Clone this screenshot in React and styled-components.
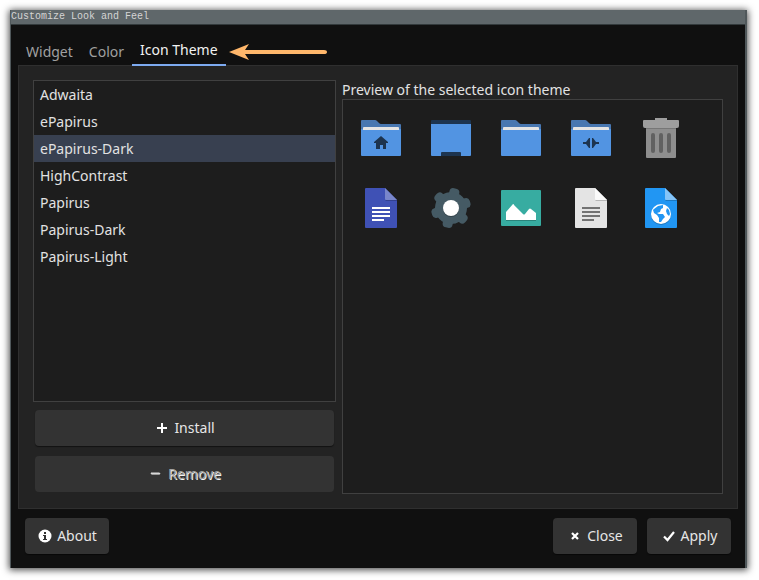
import React, { useState } from "react";
import styled, { createGlobalStyle } from "styled-components";

const GlobalStyle = createGlobalStyle`
  *, *::before, *::after { box-sizing: border-box; }
  body {
    margin: 0;
    background: #ffffff;
    color: #e2e2e2;
    font-family: "Noto Sans", "Open Sans", sans-serif;
    font-size: 14px;
    line-height: 20px;
  }
  button { font: inherit; color: inherit; }
  svg { display: block; flex: none; }
`;

const Desktop = styled.div`
  min-height: 100vh;
  padding: 10px 12px 12px 10px;
  display: flex;
`;

const Window = styled.main`
  flex: 1;
  min-width: 0;
  display: flex;
  flex-direction: column;
  background: #101010;
  border: solid #50585b;
  border-width: 0 2px 0 1px;
  box-shadow: 0 1px 7px 1px rgba(0, 0, 0, 0.7);
`;

const TitleBar = styled.header`
  height: 15px;
  background: #5f676a;
  border-bottom: 1px solid #333a3c;
  color: #d4d4d4;
  font-family: "Liberation Mono", monospace;
  font-size: 10px;
  line-height: 14px;
`;

const Body = styled.div`
  flex: 1;
  display: flex;
  flex-direction: column;
  padding: 8px 7px 14px;
`;

const TabRow = styled.div`
  display: flex;
  align-items: flex-end;
`;

const TabList = styled.div`
  position: relative;
  z-index: 1;
  display: flex;
  margin-bottom: -1px;
`;

const Tab = styled.button`
  height: 33px;
  padding: ${({ $active }) => ($active ? "3px 8px 0" : "6px 8px 0")};
  border: 0;
  border-bottom: 2px solid ${({ $active }) => ($active ? "#7daaf0" : "transparent")};
  background: none;
  color: ${({ $active }) => ($active ? "#f2f2f2" : "#a0a0a0")};
  white-space: nowrap;
`;

const ArrowSlot = styled.div`
  padding: 0 3px 4px;
`;

const Panel = styled.section`
  flex: 1;
  display: grid;
  grid-template-columns: minmax(0, 303fr) minmax(0, 381fr);
  gap: 6px;
  padding: 14px;
  background: #232323;
  border: 1px solid #2f2f2f;
`;

const Column = styled.div`
  display: flex;
  flex-direction: column;
  min-width: 0;
`;

const ThemeList = styled.ul`
  flex: 1;
  margin: 0 0 8px;
  padding: 0;
  list-style: none;
  background: #1d1d1d;
  border: 1px solid #404040;
`;

const ThemeRow = styled.button`
  display: block;
  width: 100%;
  height: 27px;
  padding: 0 6px;
  border: 0;
  background: ${({ $selected }) => ($selected ? "#384050" : "transparent")};
  text-align: left;
`;

const ButtonStack = styled.div`
  display: flex;
  flex-direction: column;
  gap: 10px;
  padding: 0 2px 2px;
`;

const Button = styled.button`
  height: 36px;
  min-width: 84px;
  padding: 0 12px;
  display: flex;
  align-items: center;
  justify-content: center;
  gap: 4px;
  border: 0;
  border-radius: 4px;
  background: #333333;
  color: #e6e6e6;
  box-shadow: 0 1px 1px rgba(0, 0, 0, 0.5);

  &:disabled {
    color: #a2a2a2;
    text-shadow: 1px 1px 0 #f4f4f4;
    box-shadow: none;
  }
`;

const PreviewTitle = styled.h2`
  margin: 0;
  height: 19px;
  font-size: 14px;
  font-weight: 400;
  line-height: 20px;
  white-space: nowrap;
`;

const PreviewBox = styled.div`
  flex: 1;
  display: grid;
  grid-template-columns: repeat(5, 40px);
  grid-auto-rows: 40px;
  gap: 30px;
  padding: 18px;
  background: #1d1d1d;
  border: 1px solid #404040;
`;

const Footer = styled.footer`
  display: flex;
  gap: 10px;
  padding: 9px 7px 0;
`;

const Spacer = styled.div`
  flex: 1;
`;

const Icon = ({ children, label }) => (
  <svg width="40" height="40" viewBox="0 0 40 40" role="img" aria-label={label}>
    {children}
  </svg>
);

const FolderIcon = ({ label, children }) => (
  <Icon label={label}>
    <path d="M1 2h13q1 0 2 1l2 2q1 1 2 1h19q1 0 1 1v10H0V3q0-1 1-1z" fill="#4877b1" />
    <path d="M0 11h40v26q0 1-1 1H1q-1 0-1-1z" fill="#5294e2" />
    <path d="M3 9h34q1 0 1 1v2H2v-2q0-1 1-1z" fill="#4877b1" />
    <path d="M3 9h34q1 0 1 1v2H2v-2q0-1 1-1z" fill="#e4e4e4" />
    {children}
  </Icon>
);

const DesktopIcon = () => (
  <Icon label="Desktop">
    <path d="M0 6h40v31q0 1-1 1H1q-1 0-1-1z" fill="#5294e2" />
    <path d="M1 2h38q1 0 1 1v3H0V3q0-1 1-1zM10 38v-3q0-1 1-1h18q1 0 1 1v3z" fill="#1d344f" />
  </Icon>
);

const TrashIcon = () => (
  <Icon label="Trash">
    <path d="M5 9h30v30q0 1-1 1H6q-1 0-1-1z" fill="#8e8e8e" />
    <path d="M5 9h30v2H5z" fill="#777777" />
    <path d="M14 0h12v2h11q1 0 1 1v5q0 2-2 2H4Q2 10 2 8V3q0-1 1-1h11z" fill="#9e9e9e" />
    <g fill="#616161">
      <rect x="10" y="15" width="4" height="20" rx="2" />
      <rect x="18" y="15" width="4" height="20" rx="2" />
      <rect x="26" y="15" width="4" height="20" rx="2" />
    </g>
  </Icon>
);

const DocumentIcon = ({ label, fill, fold, children }) => (
  <Icon label={label}>
    <path d="M5 0h19l12 12v27q0 1-1 1H5q-1 0-1-1V1q0-1 1-1z" fill={fill} />
    <path d="M24 12h12v1H25z" fill="#000000" opacity=".2" />
    <path d="M24 0l12 12H25q-1 0-1-1z" fill={fold} />
    {children}
  </Icon>
);

const TextLines = ({ fill }) => (
  <path d="M11 19h18v2H11zM11 23h18v2H11zM11 27h18v2H11zM11 31h12v2H11z" fill={fill} />
);

const GearIcon = () => (
  <Icon label="Settings">
    <g fill="#455a64" transform="rotate(12 20 20)">
      <circle cx="20" cy="20" r="16" />
      <rect x="15" y="0" width="10" height="40" rx="4" />
      <rect x="15" y="0" width="10" height="40" rx="4" transform="rotate(60 20 20)" />
      <rect x="15" y="0" width="10" height="40" rx="4" transform="rotate(120 20 20)" />
    </g>
    <circle cx="20" cy="21" r="8" fill="#34444c" />
    <circle cx="20" cy="20" r="8" fill="#ffffff" />
  </Icon>
);

const ImageIcon = () => (
  <Icon label="Image">
    <rect x="0" y="2" width="40" height="36" rx="1" fill="#37aca1" />
    <path d="M5 33v-8l7-8 11 11 6-6 6 4v7z" fill="#2a847b" />
    <path d="M5 32v-8l7-8q1 0 1 1l9 9q1 1 2 0l4-5q1-1 2 0l5 4v7z" fill="#ffffff" />
  </Icon>
);

const GlobeIcon = () => (
  <DocumentIcon label="Web page" fill="#2196f3" fold="#85c4f8">
    <circle cx="20" cy="27" r="10" fill="#1b78c2" />
    <circle cx="20" cy="26" r="10" fill="#ffffff" />
    <path
      d="M13 21l4-3 5-1 0 3-2 1-1 3-3 1 2 1 4 0 2 3-2 2-2 3-2 0 0-4-2-3-3-2-1-3zM26 20l2 2 1 4-1 2-2-2-1-3z"
      fill="#2196f3"
    />
  </DocumentIcon>
);

const Arrow = () => (
  <svg width="98" height="18" viewBox="0 0 98 18" aria-hidden="true">
    <path d="M0 9L20 1l-4 6h79q3 0 3 2t-3 2H16l4 6z" fill="#ffb76b" />
  </svg>
);

const PlusIcon = () => (
  <svg width="16" height="16" viewBox="0 0 16 16" aria-hidden="true">
    <path d="M7 3h2v4h4v2H9v4H7V9H3V7h4z" fill="#ffffff" />
  </svg>
);

const MinusIcon = () => (
  <svg width="16" height="16" viewBox="0 0 16 16" aria-hidden="true">
    <path d="M3 8l1-1 1 1 1-1 1 1 1-1 1 1 1-1 1 1 1-1" fill="none" stroke="#d6d6d6" strokeWidth="1.5" />
  </svg>
);

const InfoIcon = () => (
  <svg width="16" height="16" viewBox="0 0 16 16" aria-hidden="true">
    <circle cx="8" cy="8" r="6.5" fill="#ffffff" />
    <path d="M7 4h2v2H7zM6 7h3v4h1v1H6v-1h1V8H6z" fill="#333333" />
  </svg>
);

const CloseIcon = () => (
  <svg width="16" height="16" viewBox="0 0 16 16" aria-hidden="true">
    <path d="M5 5l6 6M11 5l-6 6" fill="none" stroke="#ffffff" strokeWidth="2.2" />
  </svg>
);

const CheckIcon = () => (
  <svg width="16" height="16" viewBox="0 0 16 16" aria-hidden="true">
    <path d="M3 8.500l3.500 3.500L13 4" fill="none" stroke="#ffffff" strokeWidth="2.2" />
  </svg>
);

const TABS = ["Widget", "Color", "Icon Theme"];
const THEMES = [
  "Adwaita",
  "ePapirus",
  "ePapirus-Dark",
  "HighContrast",
  "Papirus",
  "Papirus-Dark",
  "Papirus-Light",
];

export default function App() {
  const [tab, setTab] = useState("Icon Theme");
  const [theme, setTheme] = useState("ePapirus-Dark");

  return (
    <>
      <GlobalStyle />
      <Desktop>
        <Window>
          <TitleBar>Customize Look and Feel</TitleBar>
          <Body>
            <TabRow>
              <TabList role="tablist">
                {TABS.map((name) => (
                  <Tab
                    key={name}
                    type="button"
                    role="tab"
                    aria-selected={tab === name}
                    $active={tab === name}
                    onClick={() => setTab(name)}
                  >
                    {name}
                  </Tab>
                ))}
              </TabList>
              <ArrowSlot>
                <Arrow />
              </ArrowSlot>
            </TabRow>
            <Panel>
              <Column>
                <ThemeList>
                  {THEMES.map((name) => (
                    <li key={name}>
                      <ThemeRow
                        type="button"
                        aria-pressed={theme === name}
                        $selected={theme === name}
                        onClick={() => setTheme(name)}
                      >
                        {name}
                      </ThemeRow>
                    </li>
                  ))}
                </ThemeList>
                <ButtonStack>
                  <Button type="button">
                    <PlusIcon />
                    Install
                  </Button>
                  <Button type="button" disabled>
                    <MinusIcon />
                    Remove
                  </Button>
                </ButtonStack>
              </Column>
              <Column>
                <PreviewTitle>Preview of the selected icon theme</PreviewTitle>
                <PreviewBox>
                  <FolderIcon label="Home folder">
                    <path d="M20 18l7 6v1h-2v6h-3v-4h-3v4h-4v-6h-2v-1z" fill="#1d344f" />
                  </FolderIcon>
                  <DesktopIcon />
                  <FolderIcon label="Folder" />
                  <FolderIcon label="Remote folder">
                    <path d="M19 20v10h-1l-3-4h-3v-2h3l3-4zM21 20h1l3 4h3v2h-3l-3 4h-1z" fill="#1d344f" />
                  </FolderIcon>
                  <TrashIcon />
                  <DocumentIcon label="Document" fill="#3f51b5" fold="#7986cb">
                    <TextLines fill="#ffffff" />
                  </DocumentIcon>
                  <GearIcon />
                  <ImageIcon />
                  <DocumentIcon label="Text file" fill="#e4e4e4" fold="#fafafa">
                    <TextLines fill="#727272" />
                  </DocumentIcon>
                  <GlobeIcon />
                </PreviewBox>
              </Column>
            </Panel>
            <Footer>
              <Button type="button">
                <InfoIcon />
                About
              </Button>
              <Spacer />
              <Button type="button">
                <CloseIcon />
                Close
              </Button>
              <Button type="button">
                <CheckIcon />
                Apply
              </Button>
            </Footer>
          </Body>
        </Window>
      </Desktop>
    </>
  );
}
